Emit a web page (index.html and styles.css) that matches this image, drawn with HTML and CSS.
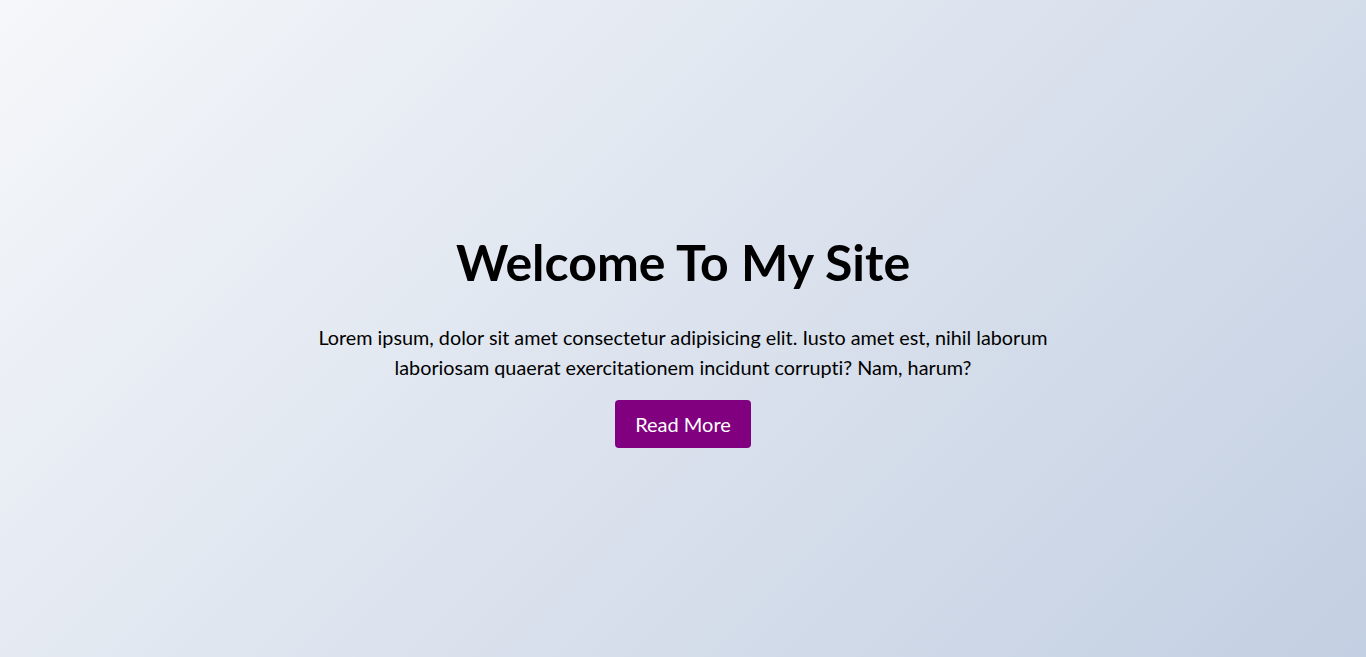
FILE: index.html
```html
<!DOCTYPE html>
<html lang="en">
<head>
<meta charset="UTF-8">
<title>Welcome</title>
<link rel="stylesheet" href="styles.css">
</head>
<body>
<main class="hero">
  <div class="hero-content">
    <h1 class="hero-title">Welcome To My Site</h1>
    <p class="hero-text">Lorem ipsum, dolor sit amet consectetur adipisicing elit. Iusto amet est, nihil laborum laboriosam quaerat exercitationem incidunt corrupti? Nam, harum?</p>
    <a href="#" class="hero-btn">Read More</a>
  </div>
</main>
</body>
</html>
```
FILE: styles.css
```css
* { box-sizing: border-box; }
html, body { margin: 0; padding: 0; }
body {
  font-family: Lato, "Open Sans", sans-serif;
  font-variant-ligatures: none;
  background: linear-gradient(135deg, #f5f7fa 0%, #c3cfe2 100%);
  min-height: 100vh;
  color: #000;
}
.hero {
  min-height: 100vh;
  display: flex;
  align-items: center;
  justify-content: center;
  padding-top: 22px;
}
.hero-content {
  width: 60%;
  text-align: center;
  display: flex;
  flex-direction: column;
  align-items: center;
}
.hero-title {
  font-size: 50px;
  font-weight: 700;
  margin: 0 0 30px;
  line-height: 1.2;
}
.hero-text {
  font-size: 19.8px;
  line-height: 30px;
  margin: 0 0 18px;
}
.hero-btn {
  display: inline-block;
  background: #800080;
  color: #fff;
  text-decoration: none;
  font-size: 20px;
  line-height: 24px;
  padding: 12px 20px;
  border-radius: 4px;
}
```
